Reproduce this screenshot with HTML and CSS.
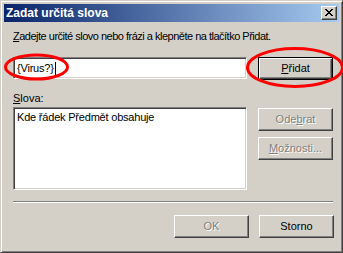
FILE: index.html
```html
<!DOCTYPE html>
<html lang="cs">
<head>
<meta charset="utf-8">
<title>Zadat určitá slova</title>
<link rel="stylesheet" href="styles.css">
</head>
<body>
<div class="window">
  <div class="titlebar">
    <span class="title">Zadat určitá slova</span>
    <div class="close">
      <svg width="8" height="7" viewBox="0 0 8 7" shape-rendering="crispEdges">
        <path d="M0 0h2v1h-2zM6 0h2v1h-2zM1 1h2v1h-2zM5 1h2v1h-2zM2 2h4v1h-4zM3 3h2v1h-2zM2 4h4v1h-4zM1 5h2v1h-2zM5 5h2v1h-2zM0 6h2v1h-2zM6 6h2v1h-2z" fill="#000"/>
      </svg>
    </div>
  </div>
  <div class="content">
    <div class="prompt"><u>Z</u>adejte určité slovo nebo frázi a klepněte na tlačítko Přidat.</div>
    <div class="row row-input">
      <div class="field sunken"><span class="value">{Virus?}</span><span class="caret"></span></div>
      <div class="btn default"><span><u>P</u>řidat</span></div>
    </div>
    <div class="label"><u>S</u>lova:</div>
    <div class="row row-list">
      <div class="list sunken"><div class="item">Kde řádek Předmět obsahuje</div></div>
      <div class="side">
        <div class="btn disabled"><span>Ode<u>b</u>rat</span></div>
        <div class="btn disabled"><span><u>M</u>ožnosti...</span></div>
      </div>
    </div>
    <div class="separator"></div>
    <div class="footer">
      <div class="btn disabled"><span>OK</span></div>
      <div class="btn"><span>Storno</span></div>
    </div>
  </div>
  <svg class="marks" width="343" height="253" viewBox="0 0 343 253">
    <ellipse cx="36.5" cy="67" rx="31" ry="12" fill="none" stroke="#ff0000" stroke-width="3"/>
    <ellipse cx="295" cy="67.5" rx="47.5" ry="19" fill="none" stroke="#ff0000" stroke-width="3"/>
  </svg>
</div>
</body>
</html>
```
FILE: styles.css
```css
html, body {
  margin: 0;
  padding: 0;
  background: #d4d0c8;
}

body {
  font-family: "Liberation Sans", Arial, sans-serif;
  font-size: 11px;
  line-height: 13px;
  color: #000;
}

.window {
  position: relative;
  width: 343px;
  height: 253px;
  box-sizing: border-box;
  background: #d4d0c8;
  border: 1px solid;
  border-color: #d4d0c8 #404040 #404040 #d4d0c8;
  box-shadow: inset 1px 1px #ffffff, inset -1px -1px #808080;
  padding: 3px;
  display: flex;
  flex-direction: column;
}

.titlebar {
  height: 18px;
  display: flex;
  align-items: center;
  justify-content: space-between;
  background: linear-gradient(to right, #0a246a, #a6caf0);
  padding: 0 2px 0 2px;
}

.title {
  color: #fff;
  font-weight: bold;
  font-size: 12px;
}

.close {
  width: 16px;
  height: 14px;
  box-sizing: border-box;
  background: #d4d0c8;
  border: 1px solid;
  border-color: #ffffff #404040 #404040 #ffffff;
  box-shadow: inset -1px -1px #808080;
  display: flex;
  align-items: center;
  justify-content: center;
  padding: 0 1px 1px 0;
}

.close svg {
  display: block;
}

.content {
  flex: 1;
  display: flex;
  flex-direction: column;
  padding: 8px 5px 0 9px;
}

.prompt {
  height: 13px;
  white-space: nowrap;
  letter-spacing: -0.5px;
}

.row {
  display: flex;
  align-items: flex-start;
  gap: 11px;
}

.row-input {
  margin-top: 14px;
}

.sunken {
  box-sizing: border-box;
  background: #fff;
  border: 1px solid;
  border-color: #808080 #ffffff #ffffff #808080;
  box-shadow: inset 1px 1px #404040, inset -1px -1px #d4d0c8;
}

.field {
  width: 234px;
  height: 22px;
  display: flex;
  align-items: center;
  padding: 0 0 0 3px;
}

.value {
  white-space: nowrap;
  letter-spacing: -0.2px;
}

.caret {
  width: 1px;
  height: 13px;
  background: #000;
  margin-left: 1px;
}

.btn {
  width: 75px;
  height: 23px;
  box-sizing: border-box;
  background: #d4d0c8;
  border: 1px solid;
  border-color: #ffffff #404040 #404040 #ffffff;
  box-shadow: inset -1px -1px #808080;
  display: flex;
  align-items: center;
  justify-content: center;
  white-space: nowrap;
  flex: none;
}

.btn span {
  padding-bottom: 1px;
}

.btn.default {
  border-color: #000;
  box-shadow: inset 1px 1px #ffffff, inset -1px -1px #404040, inset -2px -2px #808080;
}

.btn.disabled {
  color: #808080;
  text-shadow: 1px 1px #ffffff;
}

.label {
  margin-top: 12px;
  height: 13px;
}

.row-list {
  margin-top: 2px;
}

.list {
  width: 234px;
  height: 83px;
  padding: 2px 2px;
}

.item {
  padding: 1px 1px;
  white-space: nowrap;
  letter-spacing: -0.2px;
}

.side {
  display: flex;
  flex-direction: column;
  gap: 6px;
  margin-top: 1px;
}

.separator {
  margin-top: 11px;
  border-top: 1px solid #808080;
  border-bottom: 1px solid #ffffff;
  height: 0;
  margin-right: 1px;
}

.footer {
  margin-top: 12px;
  display: flex;
  justify-content: flex-end;
  gap: 10px;
}

.marks {
  position: absolute;
  left: -1px;
  top: -1px;
  pointer-events: none;
}
```
